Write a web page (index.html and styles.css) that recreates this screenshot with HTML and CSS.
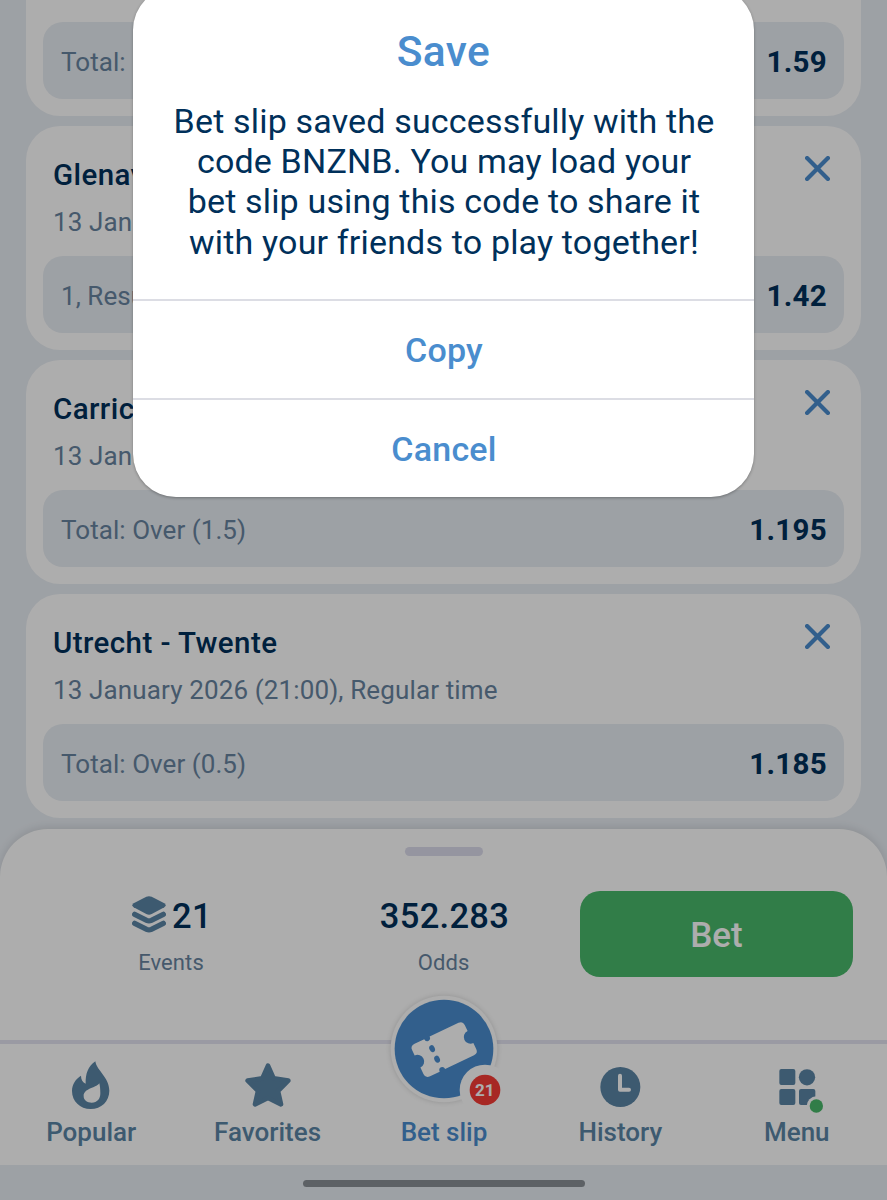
FILE: index.html
```html
<!DOCTYPE html>
<html lang="en">
<head>
  <meta charset="UTF-8" />
  <meta name="viewport" content="width=device-width, initial-scale=1.0"/>
  <title>Bet slip</title>
  <link rel="stylesheet" href="styles.css">
</head>
<body>
  <main class="slip">
    <div class="card card-cut">
      <div class="pick"><span>Total: Over</span><b>1.59</b></div>
    </div>

    <div class="card">
      <div class="card-head">
        <h3>Glenavon</h3>
        <svg class="close" viewBox="0 0 24 24"><path d="M2 2 22 22M22 2 2 22"/></svg>
      </div>
      <p class="date">13 January</p>
      <div class="pick"><span>1, Result</span><b>1.42</b></div>
    </div>

    <div class="card">
      <div class="card-head">
        <h3>Carrick</h3>
        <svg class="close" viewBox="0 0 24 24"><path d="M2 2 22 22M22 2 2 22"/></svg>
      </div>
      <p class="date">13 January</p>
      <div class="pick"><span>Total: Over (1.5)</span><b>1.195</b></div>
    </div>

    <div class="card">
      <div class="card-head">
        <h3>Utrecht - Twente</h3>
        <svg class="close" viewBox="0 0 24 24"><path d="M2 2 22 22M22 2 2 22"/></svg>
      </div>
      <p class="date">13 January 2026 (21:00), Regular time</p>
      <div class="pick"><span>Total: Over (0.5)</span><b>1.185</b></div>
    </div>
  </main>

  <section class="panel">
    <div class="handle"></div>
    <div class="summary">
      <div class="stat">
        <div class="value">
          <svg class="stack" viewBox="0 0 102 111">
            <path d="M43 2.500Q51-1 59 2.500L97 22Q105 28 97 34L59 54Q51 58 43 54L5 34Q-3 28 5 22Z"/>
            <path class="layer" d="M8 55 44 73Q51 76 58 73L94 55"/>
            <path class="layer" d="M8 82 44 100Q51 103 58 100L94 82"/>
          </svg>
          21
        </div>
        <div class="caption">Events</div>
      </div>
      <div class="stat">
        <div class="value">352.283</div>
        <div class="caption">Odds</div>
      </div>
      <button class="bet">Bet</button>
    </div>
  </section>

  <nav class="tabs">
    <a class="tab">
      <svg class="icon" viewBox="183 84 180 168">
        <path fill-rule="evenodd" d="M286 94C290 122 328 142 328 182C328 214 304 237 272 237C240 237 216 214 216 183C216 162 228 146 243 137C243 149 248 157 257 161C256 132 264 109 286 94ZM298 160C286 176 251 174 251 199C251 211 262 218 275 218C292 218 301 207 301 190C301 178 300 168 298 160Z"/>
      </svg>
      <span>Popular</span>
    </a>
    <a class="tab">
      <svg class="icon" viewBox="712 84 180 168">
        <path class="star" d="M802 107 819 145 863 152 832 183 841 223 802 204 763 223 772 183 741 152 785 145Z"/>
      </svg>
      <span>Favorites</span>
    </a>
    <a class="tab active">
      <svg class="ticket" viewBox="42 25 360 360">
        <circle class="ring" cx="222" cy="205" r="160"/>
        <circle class="disc" cx="222" cy="205" r="148"/>
        <g transform="translate(222 207) rotate(-25.500)">
          <path class="paper" d="M-72-54H-40A9 10 0 0 0-22-54H74Q88-54 88-40V-20A19 19 0 0 0 88 20V40Q88 54 74 54H-22A9 10 0 0 0-40 54H-72Q-87 54-87 40V18A20 20 0 0 0-87-22V-40Q-87-54-72-54Z"/>
          <ellipse class="disc" cx="-31" cy="-18" rx="8" ry="11"/>
          <ellipse class="disc" cx="-31" cy="17" rx="8" ry="11"/>
        </g>
        <circle class="paper" cx="345" cy="328" r="76"/>
        <circle class="badge" cx="345" cy="328" r="46"/>
        <text x="344" y="347" text-anchor="middle">21</text>
      </svg>
      <span>Bet slip</span>
    </a>
    <a class="tab">
      <svg class="icon" viewBox="151 84 180 168">
        <circle cx="242" cy="171" r="60"/>
        <path class="hands" d="M241 137V179H268"/>
      </svg>
      <span>History</span>
    </a>
    <a class="tab">
      <svg class="icon" viewBox="681 84 180 168">
        <rect x="718" y="117" width="48" height="48" rx="6"/>
        <circle cx="801" cy="142" r="24.500"/>
        <rect x="718" y="177" width="48" height="48" rx="6"/>
        <rect x="777" y="177" width="49" height="48" rx="6"/>
        <circle class="paper" cx="829" cy="228" r="29"/>
        <circle class="online" cx="829" cy="228" r="20"/>
      </svg>
      <span>Menu</span>
    </a>
  </nav>

  <footer class="gesture"><div class="gesture-bar"></div></footer>

  <div class="overlay">
    <div class="modal">
      <h2>Save</h2>
      <p>Bet slip saved successfully with the<br>code BNZNB. You may load your<br>bet slip using this code to share it<br>with your friends to play together!</p>
      <button>Copy</button>
      <button>Cancel</button>
    </div>
  </div>
</body>
</html>
```
FILE: styles.css
```css
:root {
  --bg: #e8edf3;
  --text: #00305a;
  --muted: #6784a0;
  --icon: #5b85a5;
  --blue: #4a8dce;
  --green: #49b86a;
}

* {
  box-sizing: border-box;
}

body {
  margin: 0;
  height: 1200px;
  display: flex;
  flex-direction: column;
  position: relative;
  overflow: hidden;
  background: var(--bg);
  color: var(--text);
  font-family: Roboto, sans-serif;
}

h2, h3, p {
  margin: 0;
}

button {
  border: none;
  font-family: inherit;
  font-weight: 500;
  cursor: pointer;
}

.slip {
  height: 829px;
  flex-shrink: 0;
  padding: 0 26px;
  display: flex;
  flex-direction: column;
  gap: 10px;
}

.card {
  height: 224px;
  padding: 29px 17px 17px;
  border-radius: 34px;
  background: #fff;
  display: flex;
  flex-direction: column;
}

.card-cut {
  height: 116px;
  padding-top: 0;
  border-radius: 0 0 34px 34px;
}

.card-head {
  display: flex;
  justify-content: space-between;
  padding: 0 14px 0 10px;
}

.card h3 {
  font-size: 29.5px;
  line-height: 40px;
  font-weight: 500;
  letter-spacing: 0.42px;
}

.close {
  width: 25px;
  height: 25px;
  margin-top: 1px;
  fill: none;
  stroke: var(--blue);
  stroke-width: 4;
  stroke-linecap: round;
}

.date {
  padding: 11px 10px 0;
  font-size: 26px;
  line-height: 32px;
  letter-spacing: 0.13px;
  color: var(--muted);
}

.pick {
  height: 77px;
  margin-top: auto;
  padding: 3px 17px 0 18px;
  border-radius: 20px;
  background: var(--bg);
  display: flex;
  align-items: center;
  justify-content: space-between;
  font-size: 26px;
  letter-spacing: 0.05px;
  color: var(--muted);
}

.pick b {
  font-size: 29.5px;
  font-weight: 700;
  letter-spacing: 0.3px;
  color: var(--text);
}

.panel {
  height: 211px;
  flex-shrink: 0;
  padding: 18px 34px 0 35px;
  border-radius: 48px 48px 0 0;
  background: #fff;
  box-shadow: 0 -2px 8px rgba(0, 0, 0, 0.1);
}

.handle {
  width: 78px;
  height: 9px;
  margin: 0 auto;
  border-radius: 5px;
  background: #dcdcec;
}

.summary {
  margin-top: 35px;
  display: grid;
  grid-template-columns: 272px 273px 273px;
}

.stat {
  padding-top: 4px;
  text-align: center;
}

.value {
  display: flex;
  align-items: center;
  justify-content: center;
  gap: 6px;
  padding-left: 2px;
  font-size: 34.5px;
  line-height: 42px;
  font-weight: 500;
  letter-spacing: 0.3px;
}

.stack {
  width: 34px;
  height: 37px;
  margin-top: -4px;
  fill: var(--icon);
}

.stack .layer {
  fill: none;
  stroke: var(--icon);
  stroke-width: 16;
  stroke-linecap: round;
}

.caption {
  margin-top: 12px;
  font-size: 22px;
  line-height: 28px;
  letter-spacing: 0.1px;
  color: var(--muted);
}

.bet {
  height: 86px;
  padding: 2px 0 0;
  border-radius: 20px;
  background: var(--green);
  color: #fff;
  font-size: 35px;
}

.tabs {
  height: 125px;
  flex-shrink: 0;
  padding: 0 2px 15px 3px;
  border-top: 4px solid #e4e4f0;
  background: #fff;
  display: grid;
  grid-template-columns: repeat(5, 1fr);
  grid-template-rows: 106px;
}

.tab {
  display: flex;
  flex-direction: column;
  align-items: center;
  justify-content: flex-end;
  font-size: 26px;
  line-height: 36px;
  font-weight: 500;
  color: var(--icon);
}

.icon {
  width: 60px;
  height: 56px;
  flex-shrink: 0;
  fill: var(--icon);
}

.star {
  stroke: var(--icon);
  stroke-width: 14;
  stroke-linejoin: round;
}

.hands {
  fill: none;
  stroke: #fff;
  stroke-width: 12;
  stroke-linecap: round;
  stroke-linejoin: round;
}

.icon .online {
  fill: var(--green);
}

.icon .paper,
.ticket .paper {
  fill: #fff;
}

.active {
  color: var(--blue);
}

.ticket {
  width: 120px;
  height: 120px;
  flex-shrink: 0;
  margin-bottom: 5px;
}

.ticket .ring {
  fill: #fff;
  filter: drop-shadow(0 0 8px rgba(0, 0, 0, 0.16));
}

.ticket .disc {
  fill: var(--blue);
}

.ticket .badge {
  fill: #f63c36;
}

.ticket text {
  fill: #fff;
  font-size: 51px;
  font-weight: 700;
}

.gesture {
  flex: 1;
  display: flex;
  justify-content: center;
  padding-top: 15px;
}

.gesture-bar {
  width: 282px;
  height: 7px;
  border-radius: 4px;
  background: #8a9096;
}

.overlay {
  position: absolute;
  inset: 0;
  background: rgba(0, 0, 0, 0.32);
  display: flex;
  align-items: flex-start;
  justify-content: center;
}

.modal {
  width: 621px;
  height: 510px;
  margin-top: -13px;
  padding-top: 40px;
  border-radius: 43px;
  background: #fff;
  box-shadow: 0 1px 3px rgba(0, 0, 0, 0.3);
  display: flex;
  flex-direction: column;
  text-align: center;
}

.modal h2 {
  font-size: 42.5px;
  line-height: 50px;
  font-weight: 500;
  letter-spacing: 0.4px;
  color: var(--blue);
}

.modal p {
  flex: 1;
  margin-top: 24px;
  padding-left: 1px;
  font-size: 34px;
  line-height: 40.2px;
  letter-spacing: 0.17px;
}

.modal button {
  height: 99px;
  padding: 0 0 0 1px;
  border-top: 2px solid #dcdde4;
  background: none;
  font-size: 34px;
  letter-spacing: 0.2px;
  color: var(--blue);
}
```
